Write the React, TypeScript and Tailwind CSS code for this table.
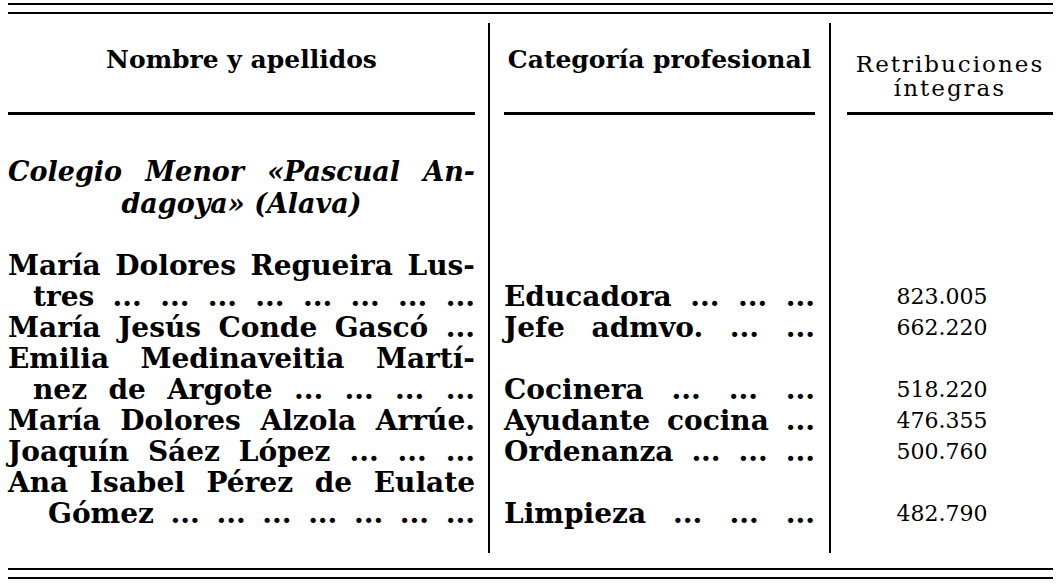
import React from "react"

type Row = { name: string; indent?: string; cat?: string; pay?: string }

const rows: Row[] = [
    { name: "María Dolores Regueira Lus-" },
    { name: "tres ... ... ... ... ... ... ... ...", indent: "pl-[25px]", cat: "Educadora ... ... ...", pay: "823.005" },
    { name: "María Jesús Conde Gascó ...", cat: "Jefe admvo. ... ...", pay: "662.220" },
    { name: "Emilia Medinaveitia Martí-" },
    { name: "nez de Argote ... ... ... ...", indent: "pl-[25px]", cat: "Cocinera ... ... ...", pay: "518.220" },
    { name: "María Dolores Alzola Arrúe.", cat: "Ayudante cocina ...", pay: "476.355" },
    { name: "Joaquín Sáez López ... ... ...", cat: "Ordenanza ... ... ...", pay: "500.760" },
    { name: "Ana Isabel Pérez de Eulate" },
    { name: "Gómez ... ... ... ... ... ... ...", indent: "pl-[40px]", cat: "Limpieza ... ... ...", pay: "482.790" },
]

const serif = "font-['DejaVu_Serif','Liberation_Serif',serif]"

// one typeset line, words spread edge to edge like justified print
function Justified({ text, className = "" }: { text: string; className?: string }) {
    return (
        <div className={`flex items-center justify-between ${className}`}>
            {text.split(" ").map((w, i) => (
                <span key={i}>{w}</span>
            ))}
        </div>
    )
}

function Rule() {
    return <div className="h-[2px] bg-black" />
}

export default function App() {
    return (
        <div className={`w-[1059px] h-[583px] bg-white text-black pl-[8px] pr-[6px] pt-[3px] ${serif}`}>
            <Rule />
            <div className="mt-[7px]">
                <Rule />
            </div>

            <div className="mt-[9px] flex h-[530px]">
                {/* Nombre y apellidos */}
                <div className="w-[480px] pr-[13px] flex flex-col">
                    <div className="h-[89px] pt-[23px]">
                        <div className="h-[28px] flex items-center justify-center font-bold text-[25px]">
                            Nombre y apellidos
                        </div>
                    </div>
                    <div className="h-[3px] bg-black" />
                    <div className="h-[41px]" />
                    <div className="font-bold italic text-[27px]">
                        <Justified text="Colegio Menor «Pascual An-" className="h-[32px]" />
                        <div className="h-[32px] flex items-center justify-center">dagoya» (Alava)</div>
                    </div>
                    <div className="h-[30px]" />
                    <div className="font-bold text-[28px]">
                        {rows.map((r, i) => (
                            <Justified key={i} text={r.name} className={`h-[31px] ${r.indent ?? ""}`} />
                        ))}
                    </div>
                </div>

                {/* Categoría profesional */}
                <div className="w-[343px] border-x-2 border-black px-[14px] flex flex-col">
                    <div className="h-[89px] pt-[23px]">
                        <div className="h-[28px] flex items-center justify-center font-bold text-[25px]">
                            Categoría profesional
                        </div>
                    </div>
                    <div className="h-[3px] bg-black" />
                    <div className="h-[135px]" />
                    <div className="font-bold text-[28px]">
                        {rows.map((r, i) =>
                            r.cat ? (
                                <Justified key={i} text={r.cat} className="h-[31px]" />
                            ) : (
                                <div key={i} className="h-[31px]" />
                            )
                        )}
                    </div>
                </div>

                {/* Retribuciones íntegras */}
                <div className="flex-1 flex flex-col">
                    <div className="h-[89px] pt-[29px] pl-[16px] text-[23px] tracking-[2px] leading-[24px] text-center">
                        <div>Retribuciones</div>
                        <div>íntegras</div>
                    </div>
                    <div className="ml-[16px] h-[3px] bg-black" />
                    <div className="h-[135px]" />
                    <div className="text-[22px]">
                        {rows.map((r, i) => (
                            <div key={i} className="h-[31px] flex items-center justify-center">
                                {r.pay ?? ""}
                            </div>
                        ))}
                    </div>
                </div>
            </div>

            <div className="mt-[15px]">
                <Rule />
            </div>
            <div className="mt-[7px]">
                <Rule />
            </div>
        </div>
    )
}
